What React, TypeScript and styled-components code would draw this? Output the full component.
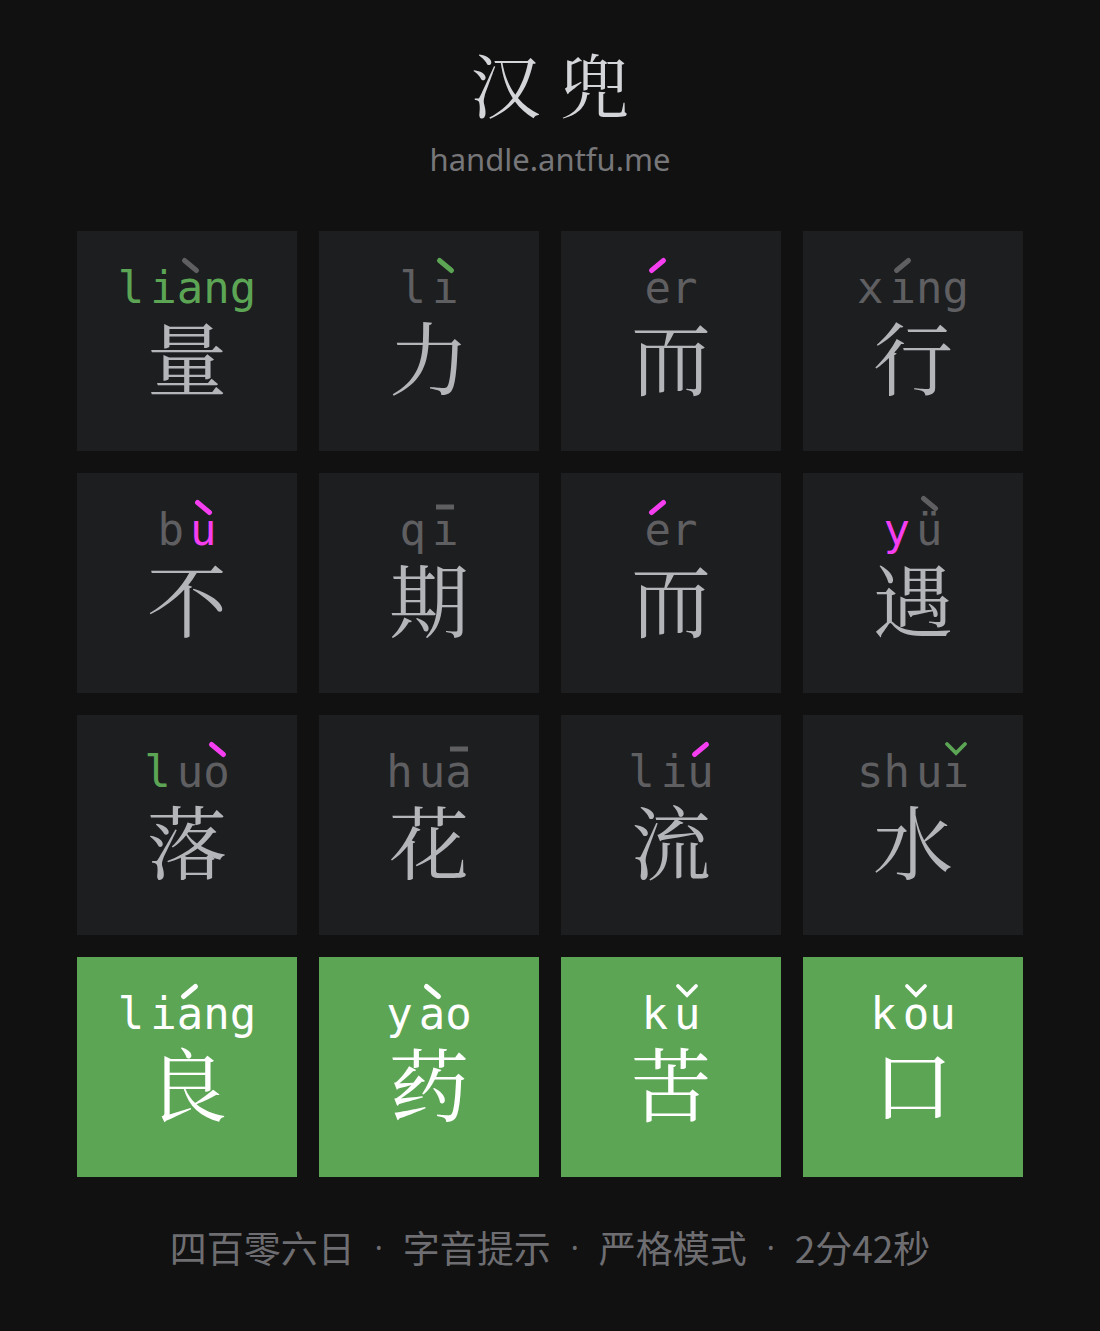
import React from "react";
import styled, { createGlobalStyle } from "styled-components";

type Col = "g" | "m" | "d" | "w";
type Letter = { t: string; c: Col; tone?: 1 | 2 | 3 | 4; tc?: Col; uml?: boolean };
type Syl = { ini: Letter[]; fin: Letter[]; ch: string };

const COLORS: Record<Col, string> = {
  g: "#5ca555",
  m: "#f43ef0",
  d: "#5f5f62",
  w: "#ffffff",
};

const GlobalStyle = createGlobalStyle`
  html, body { margin: 0; padding: 0; background: #111111; }
  body { font-family: "Noto Sans", "Noto Sans CJK SC", sans-serif; }
`;

const Page = styled.main`
  min-height: 1331px;
  background: #111111;
  display: flex;
  flex-direction: column;
  align-items: center;
  box-sizing: border-box;
  padding-top: 48px;
`;

const Title = styled.h1`
  margin: 0;
  font-family: "Noto Serif CJK SC", "Noto Serif SC", "Noto Sans CJK SC", serif;
  font-weight: 400;
  font-size: 70px;
  line-height: 70px;
  letter-spacing: 19px;
  padding-left: 19px;
  color: #d4d5d9;
`;

const Subtitle = styled.div`
  margin-top: 26px;
  font-family: "Noto Sans", sans-serif;
  font-size: 31px;
  line-height: 31px;
  color: #77777a;
`;

const Grid = styled.section`
  margin-top: 56px;
  display: grid;
  grid-template-columns: repeat(4, 220px);
  grid-auto-rows: 220px;
  gap: 22px;
`;

const Tile = styled.div<{ $solved?: boolean }>`
  box-sizing: border-box;
  background: ${(p) => (p.$solved ? "#5ca555" : "#1d1e20")};
  display: flex;
  flex-direction: column;
  align-items: center;
  padding-top: 35px;
`;

const Pinyin = styled.div`
  display: flex;
  gap: 6px;
  font-family: "DejaVu Sans Mono", "Liberation Mono", monospace;
  font-size: 44px;
  line-height: 44px;
  height: 44px;
`;

const Part = styled.span`
  display: flex;
`;

const LetterBox = styled.span<{ $c: string }>`
  position: relative;
  display: inline-block;
  color: ${(p) => p.$c};
`;

const ToneSvg = styled.svg<{ $high?: boolean }>`
  position: absolute;
  left: 50%;
  top: ${(p) => (p.$high ? "-13px" : "-9px")};
  transform: translateX(-50%);
  overflow: visible;
`;

const Hanzi = styled.div<{ $solved?: boolean }>`
  margin-top: 5px;
  font-family: "Noto Serif CJK SC", "Noto Serif SC", "Noto Sans CJK SC", serif;
  font-size: 80px;
  line-height: 80px;
  color: ${(p) => (p.$solved ? "#ffffff" : "#b3b5b9")};
`;

const Footer = styled.footer`
  margin-top: 52px;
  display: flex;
  align-items: center;
  font-family: "Noto Sans CJK SC", sans-serif;
  font-size: 37px;
  line-height: 37px;
  color: #6e6e72;
`;

const Dot = styled.span`
  width: 48px;
  text-align: center;
  font-family: "Noto Sans", sans-serif;
  font-size: 30px;
`;

function Tone({ tone, color, high }: { tone: 1 | 2 | 3 | 4; color: string; high?: boolean }) {
  let d = "";
  if (tone === 1) d = "M1 8 L19 8";
  if (tone === 2) d = "M3.5 13.5 L15.5 3.5";
  if (tone === 3) d = "M1 3 L10 12 L19 3";
  if (tone === 4) d = "M4.5 3.5 L16.5 13.5";
  return (
    <ToneSvg $high={high} width="20" height="16" viewBox="0 0 20 16">
      <path
        d={d}
        fill="none"
        stroke={color}
        strokeWidth={tone === 3 ? 3.8 : 5}
        strokeLinecap={tone === 1 ? "butt" : "round"}
        strokeLinejoin="miter"
      />
    </ToneSvg>
  );
}

const L = (t: string, c: Col, tone?: 1 | 2 | 3 | 4, tc?: Col, uml?: boolean): Letter => ({ t, c, tone, tc, uml });

const rows: Syl[][] = [
  [
    { ini: [L("l", "g")], fin: [L("i", "g"), L("a", "g", 4, "d"), L("n", "g"), L("g", "g")], ch: "量" },
    { ini: [L("l", "d")], fin: [L("ı", "d", 4, "g")], ch: "力" },
    { ini: [], fin: [L("e", "d", 2, "m"), L("r", "d")], ch: "而" },
    { ini: [L("x", "d")], fin: [L("ı", "d", 2, "d"), L("n", "d"), L("g", "d")], ch: "行" },
  ],
  [
    { ini: [L("b", "d")], fin: [L("u", "m", 4, "m")], ch: "不" },
    { ini: [L("q", "d")], fin: [L("ı", "d", 1, "d")], ch: "期" },
    { ini: [], fin: [L("e", "d", 2, "m"), L("r", "d")], ch: "而" },
    { ini: [L("y", "m")], fin: [L("ü", "d", 4, "d", true)], ch: "遇" },
  ],
  [
    { ini: [L("l", "g")], fin: [L("u", "d"), L("o", "d", 4, "m")], ch: "落" },
    { ini: [L("h", "d")], fin: [L("u", "d"), L("a", "d", 1, "d")], ch: "花" },
    { ini: [L("l", "d")], fin: [L("i", "d"), L("u", "d", 2, "m")], ch: "流" },
    { ini: [L("s", "d"), L("h", "d")], fin: [L("u", "d"), L("ı", "d", 3, "g")], ch: "水" },
  ],
  [
    { ini: [L("l", "w")], fin: [L("i", "w"), L("a", "w", 2, "w"), L("n", "w"), L("g", "w")], ch: "良" },
    { ini: [L("y", "w")], fin: [L("a", "w", 4, "w"), L("o", "w")], ch: "药" },
    { ini: [L("k", "w")], fin: [L("u", "w", 3, "w")], ch: "苦" },
    { ini: [L("k", "w")], fin: [L("o", "w", 3, "w"), L("u", "w")], ch: "口" },
  ],
];

function Letters({ list }: { list: Letter[] }) {
  return (
    <Part>
      {list.map((l, i) => (
        <LetterBox key={i} $c={COLORS[l.c]}>
          {l.t}
          {l.tone && <Tone tone={l.tone} color={COLORS[l.tc || l.c]} high={l.uml} />}
        </LetterBox>
      ))}
    </Part>
  );
}

function Cell({ s, solved }: { s: Syl; solved?: boolean }) {
  return (
    <Tile $solved={solved}>
      <Pinyin>
        {s.ini.length > 0 && <Letters list={s.ini} />}
        <Letters list={s.fin} />
      </Pinyin>
      <Hanzi $solved={solved}>{s.ch}</Hanzi>
    </Tile>
  );
}

export default function App() {
  return (
    <>
      <GlobalStyle />
      <Page>
        <Title>汉兜</Title>
        <Subtitle>handle.antfu.me</Subtitle>
        <Grid>
          {rows.map((row, ri) =>
            row.map((s, ci) => <Cell key={`${ri}-${ci}`} s={s} solved={ri === 3} />)
          )}
        </Grid>
        <Footer>
          <span>四百零六日</span>
          <Dot>·</Dot>
          <span>字音提示</span>
          <Dot>·</Dot>
          <span>严格模式</span>
          <Dot>·</Dot>
          <span>2分42秒</span>
        </Footer>
      </Page>
    </>
  );
}
